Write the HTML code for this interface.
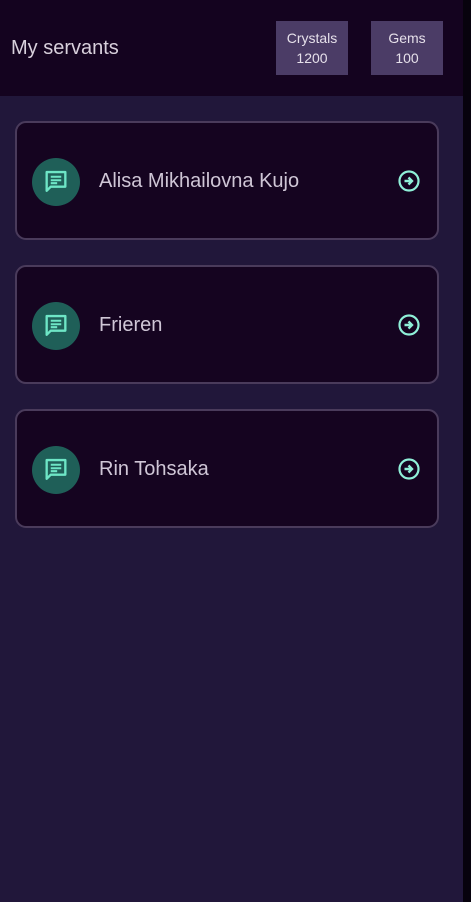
<!DOCTYPE html>
<html><head><style>
body{margin:0;width:471px;height:902px;background:#21173a;font-family:"Liberation Sans",sans-serif;position:relative;overflow:hidden}
.strip{position:absolute;right:0;top:0;width:8px;height:902px;background:#07020d}
.hdr{position:absolute;left:0;top:0;width:463px;height:96px;background:#14031f}
.title{position:absolute;left:11px;top:37px;font-size:20px;color:#d8d0dc}
.box{position:absolute;top:21px;width:72px;height:54px;background:#4b3c66;color:#e6e0ea;font-size:14px;text-align:center;line-height:20px;padding-top:7px;box-sizing:border-box}
.card{position:absolute;left:15px;width:424px;height:119px;background:#150420;border:2px solid #4a3b5b;border-radius:11px;box-sizing:border-box}
.av{position:absolute;left:15px;top:35px;width:48px;height:48px;border-radius:50%;background:#1f5f58}
.av svg{position:absolute;left:10px;top:10px}
.nm{position:absolute;left:82px;top:47px;font-size:20px;color:#cfc6d6}
.ar{position:absolute;left:381px;top:47px}
</style></head><body>
<div class="hdr"><div class="title">My servants</div>
<div class="box" style="left:276px">Crystals<br>1200</div>
<div class="box" style="left:371px">Gems<br>100</div></div>
<div class="strip"></div>

<div class="card" style="top:121px"><div class="av"><svg width="28" height="28" viewBox="0 0 24 24"><path d="M4 3.5h16v12.5H7.5L4 19.5z" fill="none" stroke="#6ee6c6" stroke-width="2" stroke-linejoin="round"/><path d="M7.5 7.5h9M7.5 10.5h9M7.5 13h5.5" stroke="#6ee6c6" stroke-width="1.8"/></svg></div><div class="nm">Alisa Mikhailovna Kujo</div><div class="ar"><svg width="22" height="22" viewBox="0 0 22 22"><circle cx="11" cy="11" r="9.5" fill="none" stroke="#8ff0d8" stroke-width="2.2"/><path d="M6.5 11h7M10.5 7.5L14 11l-3.5 3.5" fill="none" stroke="#8ff0d8" stroke-width="2.4"/></svg></div></div>

<div class="card" style="top:265px"><div class="av"><svg width="28" height="28" viewBox="0 0 24 24"><path d="M4 3.5h16v12.5H7.5L4 19.5z" fill="none" stroke="#6ee6c6" stroke-width="2" stroke-linejoin="round"/><path d="M7.5 7.5h9M7.5 10.5h9M7.5 13h5.5" stroke="#6ee6c6" stroke-width="1.8"/></svg></div><div class="nm">Frieren</div><div class="ar"><svg width="22" height="22" viewBox="0 0 22 22"><circle cx="11" cy="11" r="9.5" fill="none" stroke="#8ff0d8" stroke-width="2.2"/><path d="M6.5 11h7M10.5 7.5L14 11l-3.5 3.5" fill="none" stroke="#8ff0d8" stroke-width="2.4"/></svg></div></div>

<div class="card" style="top:409px"><div class="av"><svg width="28" height="28" viewBox="0 0 24 24"><path d="M4 3.5h16v12.5H7.5L4 19.5z" fill="none" stroke="#6ee6c6" stroke-width="2" stroke-linejoin="round"/><path d="M7.5 7.5h9M7.5 10.5h9M7.5 13h5.5" stroke="#6ee6c6" stroke-width="1.8"/></svg></div><div class="nm">Rin Tohsaka</div><div class="ar"><svg width="22" height="22" viewBox="0 0 22 22"><circle cx="11" cy="11" r="9.5" fill="none" stroke="#8ff0d8" stroke-width="2.2"/><path d="M6.5 11h7M10.5 7.5L14 11l-3.5 3.5" fill="none" stroke="#8ff0d8" stroke-width="2.4"/></svg></div></div>
</body></html>
